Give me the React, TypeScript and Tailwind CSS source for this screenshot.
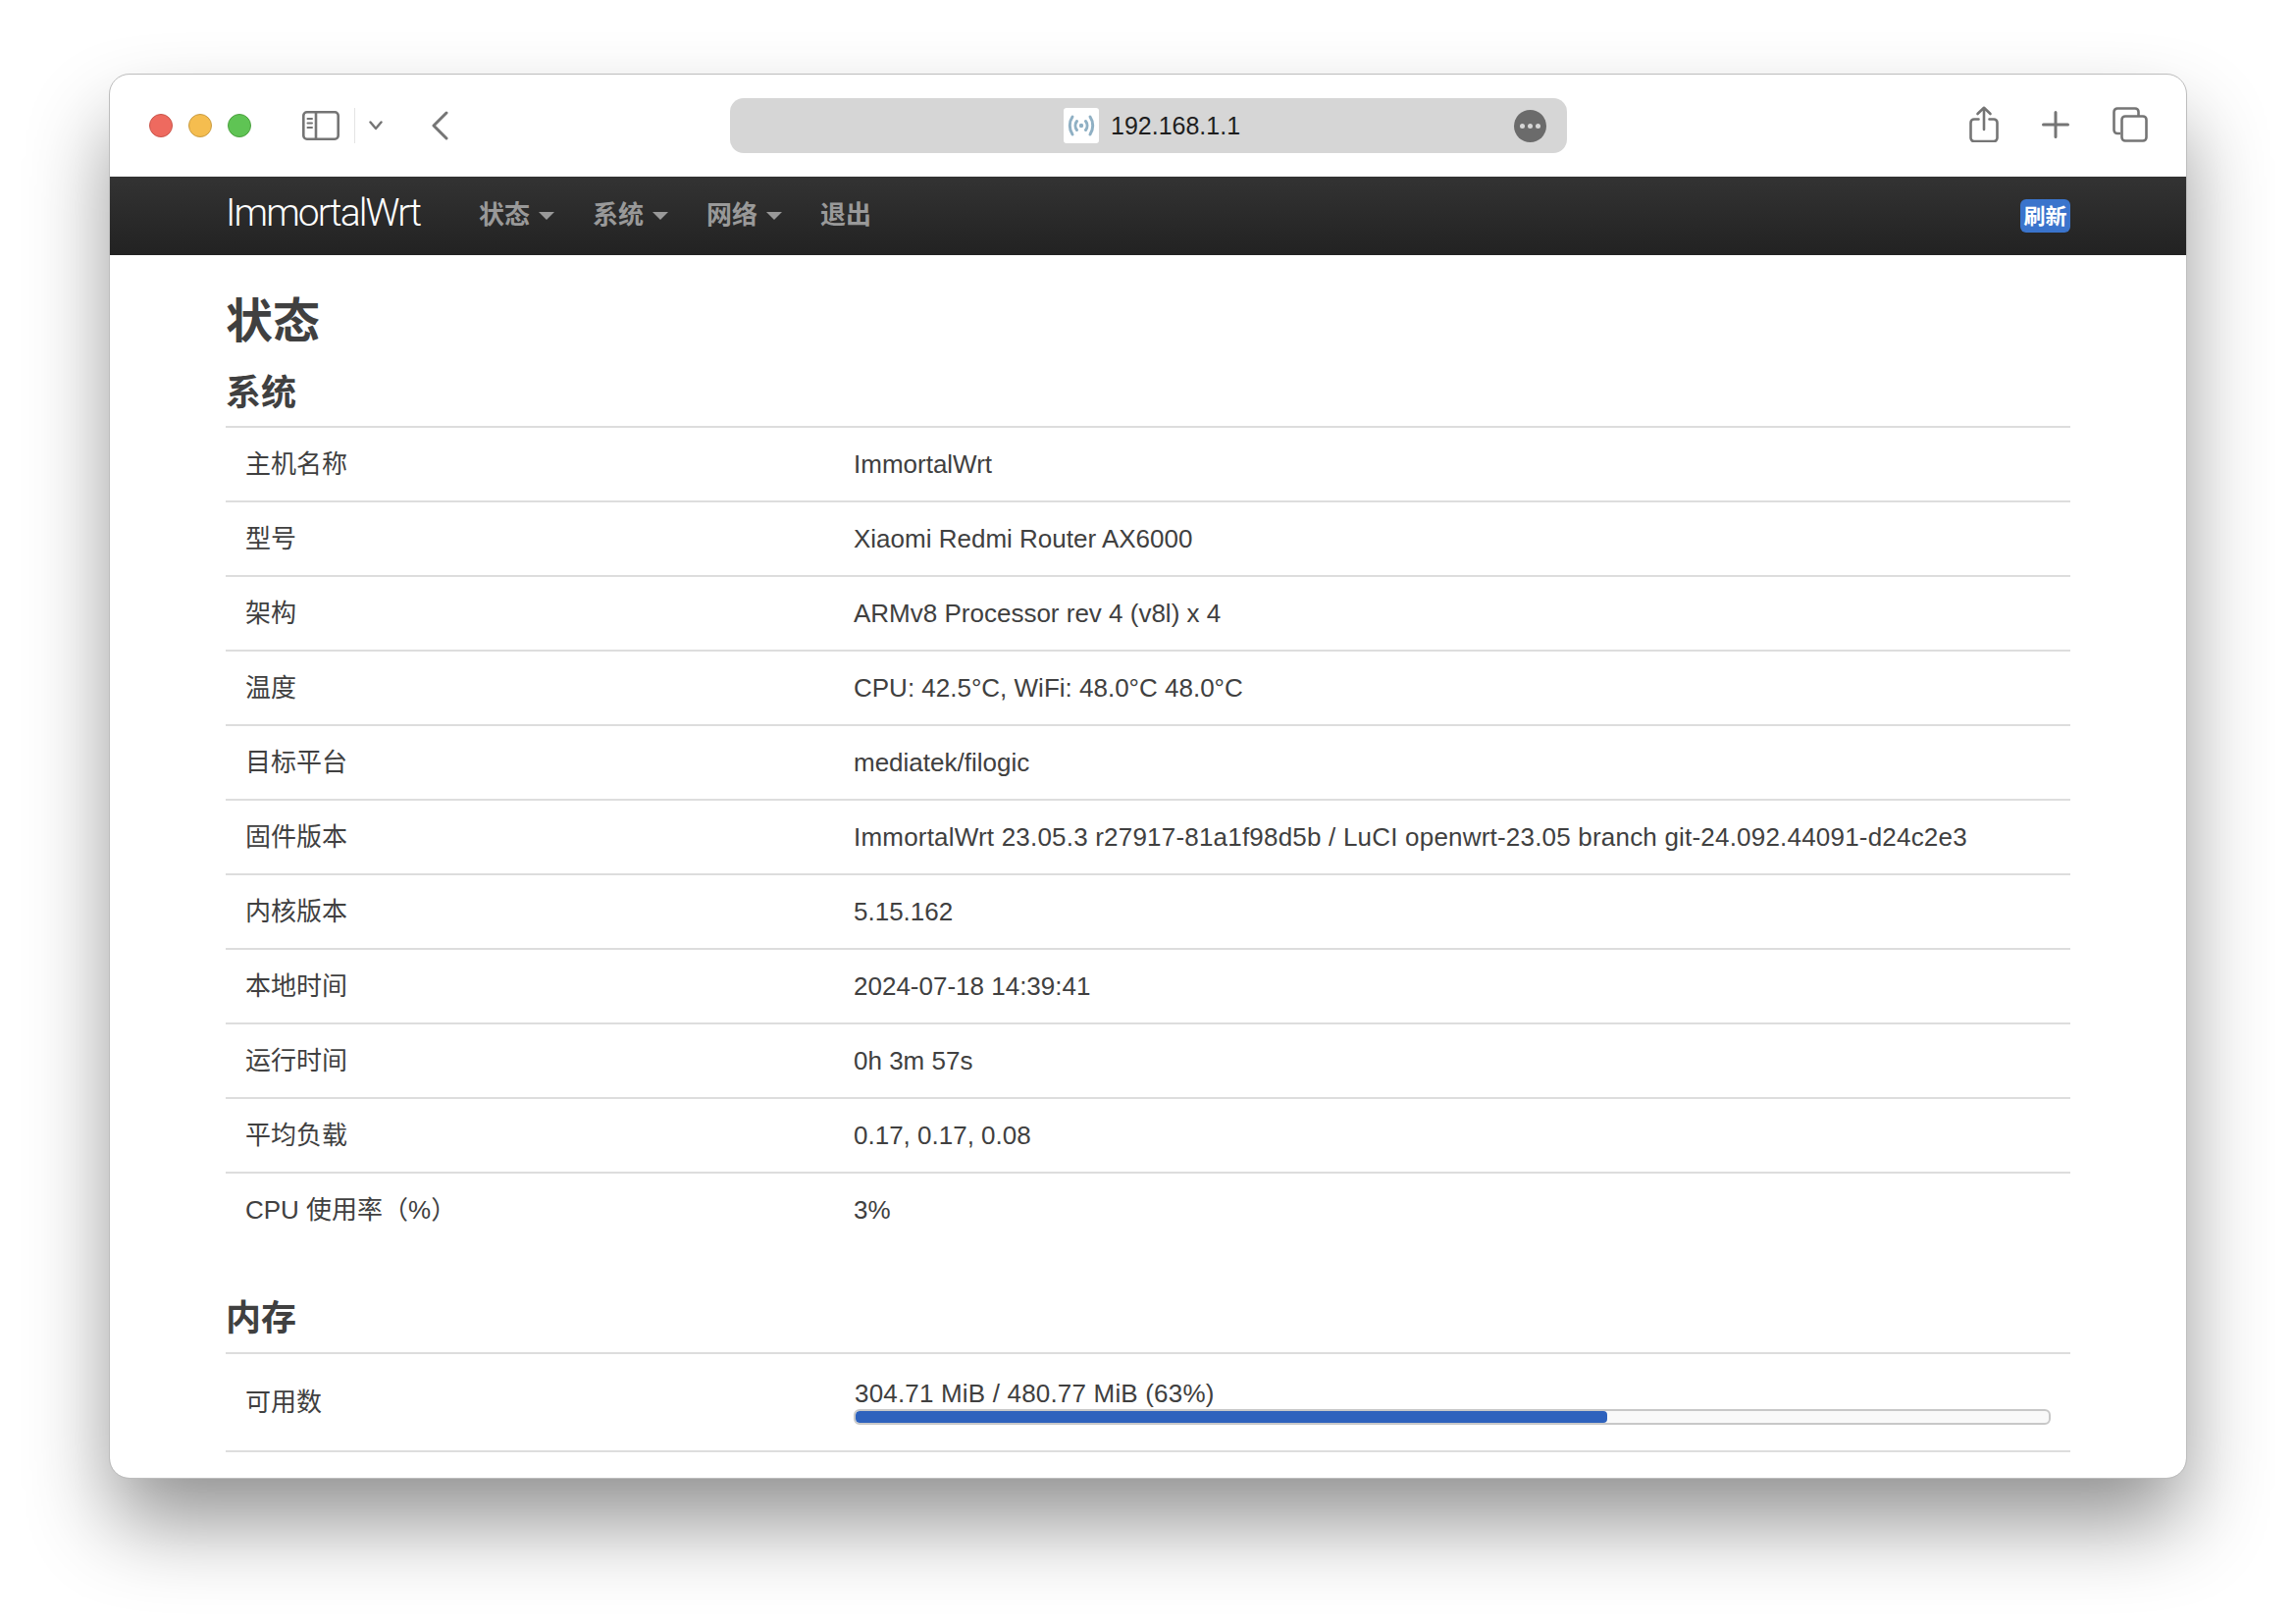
const FONT = '"Liberation Sans", "Noto Sans CJK SC", sans-serif'

const SYSTEM_ROWS = [
  ['主机名称', 'ImmortalWrt'],
  ['型号', 'Xiaomi Redmi Router AX6000'],
  ['架构', 'ARMv8 Processor rev 4 (v8l) x 4'],
  ['温度', 'CPU: 42.5°C, WiFi: 48.0°C 48.0°C'],
  ['目标平台', 'mediatek/filogic'],
  ['固件版本', 'ImmortalWrt 23.05.3 r27917-81a1f98d5b / LuCI openwrt-23.05 branch git-24.092.44091-d24c2e3'],
  ['内核版本', '5.15.162'],
  ['本地时间', '2024-07-18 14:39:41'],
  ['运行时间', '0h 3m 57s'],
  ['平均负载', '0.17, 0.17, 0.08'],
  ['CPU 使用率（%）', '3%'],
]

const NAV_ITEMS = ['状态', '系统', '网络']

function Toolbar() {
  return (
    <div className="h-[104px] flex items-center bg-white pl-[40px] pr-[39px]">
      {/* traffic lights */}
      <div className="flex gap-[16px]">
        <div className="w-[24px] h-[24px] rounded-full bg-[#ee6a5f] border border-[#c9554b]" />
        <div className="w-[24px] h-[24px] rounded-full bg-[#f5bd4f] border border-[#c99c42]" />
        <div className="w-[24px] h-[24px] rounded-full bg-[#5fc454] border border-[#4ba03f]" />
      </div>
      <svg className="ml-[52px]" width="38" height="30" viewBox="0 0 38 30" fill="none" stroke="#757575" strokeWidth="2.6">
        <rect x="1.3" y="1.3" width="35.4" height="27.4" rx="3.5" />
        <path d="M14 1.3v27.4" />
        <path d="M5.5 8h4.5M5.5 12.5h4.5M5.5 17h4.5" strokeWidth="2" strokeLinecap="round" />
      </svg>
      <div className="ml-[15px] w-[1px] h-[36px] bg-[#e4e4e4]" />
      <svg className="ml-[14px]" width="14" height="10" viewBox="0 0 14 10" fill="none" stroke="#757575" strokeWidth="2.4" strokeLinecap="round" strokeLinejoin="round">
        <path d="M1.5 1.5 7 8l5.5-6.5" />
      </svg>
      <svg className="ml-[49px]" width="18" height="30" viewBox="0 0 18 30" fill="none" stroke="#757575" strokeWidth="3" strokeLinecap="round" strokeLinejoin="round">
        <path d="M16 2 3 15l13 13" />
      </svg>
      {/* address bar */}
      <div className="ml-[287px] w-[853px] h-[56px] rounded-[14px] bg-[#d6d6d6] flex items-center pl-[340px] pr-[21px]">
        <div className="w-[36px] h-[36px] bg-white rounded-[3px] flex items-center justify-center">
          <svg width="28" height="24" viewBox="0 0 28 24" fill="none" stroke="#8fb0c4" strokeWidth="3" strokeLinecap="round">
            <circle cx="14" cy="12" r="2.2" fill="#8fb0c4" stroke="none" />
            <path d="M9.5 7.500c-2 2.600-2 6.400 0 9M18.500 7.500c2 2.600 2 6.400 0 9" />
            <path d="M5 3c-3.600 5.300-3.600 12.700 0 18M23 3c3.600 5.300 3.600 12.700 0 18" />
          </svg>
        </div>
        <span className="ml-[12px] text-[25px] text-[#1e1e1e] leading-none">192.168.1.1</span>
        <div className="ml-auto w-[33px] h-[33px] rounded-full bg-[#6b6b6b] flex items-center justify-center gap-[3px]">
          <span className="w-[5px] h-[5px] rounded-full bg-[#d6d6d6]" />
          <span className="w-[5px] h-[5px] rounded-full bg-[#d6d6d6]" />
          <span className="w-[5px] h-[5px] rounded-full bg-[#d6d6d6]" />
        </div>
      </div>
      {/* right icons */}
      <div className="ml-auto flex items-center -mt-[3px]">
        <svg width="30" height="37" viewBox="0 0 30 37" fill="none" stroke="#757575" strokeWidth="2.6" strokeLinecap="round" strokeLinejoin="round">
          <path d="M9.500 13.500H5A3.500 3.500 0 0 0 1.500 17v15.500A3.500 3.500 0 0 0 5 36h20a3.500 3.500 0 0 0 3.500-3.500V17a3.500 3.500 0 0 0-3.500-3.500h-4.500" />
          <path d="M15 24V2M8.500 8 15 1.800 21.500 8" />
        </svg>
        <svg className="ml-[44px]" width="28" height="28" viewBox="0 0 28 28" fill="none" stroke="#757575" strokeWidth="3" strokeLinecap="round">
          <path d="M14 1.500v25M1.500 14h25" />
        </svg>
        <svg className="ml-[44px]" width="36" height="36" viewBox="0 0 36 36" fill="none" stroke="#757575" strokeWidth="2.6" strokeLinejoin="round">
          <path d="M8 27H5a3.500 3.500 0 0 1-3.500-3.500V5A3.500 3.500 0 0 1 5 1.500h18A3.500 3.500 0 0 1 26.500 5v4" />
          <rect x="9.500" y="9.500" width="25" height="25" rx="3.500" />
        </svg>
      </div>
    </div>
  )
}

function Navbar() {
  return (
    <div className="h-[80px] flex items-center bg-gradient-to-b from-[#333333] to-[#222222] pl-[118px] pr-[118px]">
      <span className="text-[39px] leading-none font-light text-white tracking-[-1.9px] w-[258px] -mt-[6px]" style={{ fontFamily: 'Roboto, sans-serif' }}>ImmortalWrt</span>
      {NAV_ITEMS.map(item => (
        <div key={item} className="w-[116px] flex items-center text-[26px] font-bold text-[#999999] -mt-[2px]">
          {item}
          <span className="ml-[9px] mt-[2px] w-0 h-0 border-x-[8px] border-x-transparent border-t-[8px] border-t-[#999999]" />
        </div>
      ))}
      <span className="text-[26px] font-bold text-[#999999] -mt-[2px]">退出</span>
      <div className="ml-auto w-[51px] h-[34px] rounded-[6px] bg-[#3a74cc] text-white text-[22px] font-bold flex items-center justify-center">刷新</div>
    </div>
  )
}

export default function App() {
  return (
    <div className="min-h-[1654px] bg-white pt-[76px] pl-[112px]" style={{ fontFamily: FONT }}>
      <div className="w-[2116px] h-[1430px] bg-white rounded-[20px] overflow-hidden outline outline-1 outline-[#bdbdbd] shadow-[0_48px_86px_-4px_rgba(0,0,0,0.44)]">
        <Toolbar />
        <Navbar />
        <div className="px-[118px] text-[26px] text-[#404040]">
          <h1 className="h-[94px] pt-[24px] text-[48px] leading-[88px] font-bold">状态</h1>
          <h2 className="h-[82px] flex items-end pb-[10px] border-b-2 border-[#dddddd] text-[36px] leading-[46px] font-bold">系统</h2>
          {SYSTEM_ROWS.map(([label, value], i) => (
            <div key={label} className={`h-[76px] flex items-center border-b-2 ${i < SYSTEM_ROWS.length - 1 ? 'border-[#dddddd]' : 'border-transparent'}`}>
              <div className="w-[620px] pl-[20px] shrink-0">{label}</div>
              <div className={`pl-[20px] ${i === 5 ? 'tracking-[0.2px]' : ''}`}>{value}</div>
            </div>
          ))}
          <h2 className="mt-[47px] h-[61px] flex items-end pb-[11px] border-b-2 border-[#dddddd] text-[36px] leading-[46px] font-bold">内存</h2>
          <div className="h-[100px] flex items-center border-b-2 border-[#dddddd]">
            <div className="w-[620px] pl-[20px] shrink-0">可用数</div>
            <div className="flex-1 pl-[20px] pr-[20px]">
              <div className="leading-[30px] -mt-[2px] pl-[1px] tracking-[0.18px]">304.71 MiB / 480.77 MiB (63%)</div>
              <div className="mt-[1px] h-[16px] rounded-[6px] border-2 border-[#c8c8c8] bg-[#f9f9f9] overflow-hidden">
                <div className="h-full rounded-[4px] bg-[#2e62bd]" style={{ width: '63%' }} />
              </div>
            </div>
          </div>
        </div>
      </div>
    </div>
  )
}
